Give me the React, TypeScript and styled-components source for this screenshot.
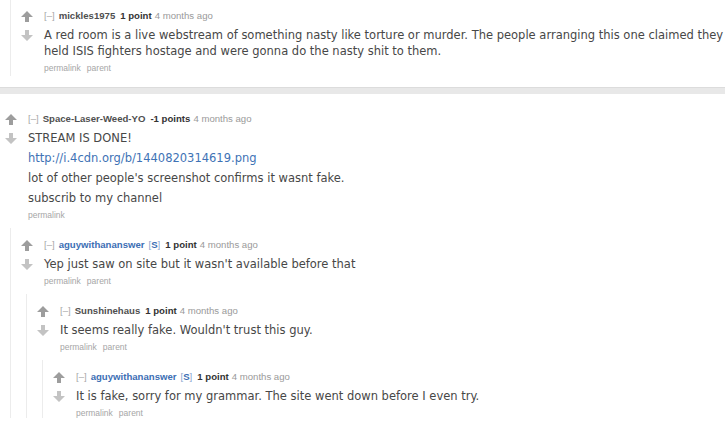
import React from 'react';
import styled, { createGlobalStyle } from 'styled-components';

const GlobalStyle = createGlobalStyle`
	html, body {
		margin: 0;
		padding: 0;
		background: #fff;
	}
	body {
		font-family: "DejaVu Sans", Verdana, sans-serif;
		overflow: hidden;
	}
`;

const Page = styled.div`
	width: 725px;
	height: 423px;
	overflow: hidden;
`;

const TopThread = styled.div`
	margin-left: 10px;
	border-left: 1px solid #ececec;
	padding: 9px 0 3px 10px;
`;

const Separator = styled.div`
	margin-top: 11px;
	height: 6px;
	background: #e8e8e8;
	border-top: 1px solid #dcdcdc;
`;

const Listing = styled.div`
	padding: 18px 0 0 5px;
`;

const Thread = styled.div``;

const Row = styled.div`
	display: flex;
	align-items: flex-start;
`;

const Midcol = styled.div`
	width: 23px;
	flex: none;
	display: flex;
	flex-direction: column;
	padding-top: 2px;
	gap: 8px;
`;

const Entry = styled.div`
	flex: 1;
	min-width: 0;
`;

const Tagline = styled.div`
	font-family: "Liberation Sans", Arial, sans-serif;
	font-size: 9.6px;
	line-height: 14px;
	color: #888;
	white-space: nowrap;
`;

const Expand = styled.span`
	color: #a8a8a8;
	margin-right: 4px;
`;

const Author = styled.span<{ $submitter?: boolean }>`
	font-weight: bold;
	color: ${(p) => (p.$submitter ? '#3c6eb4' : '#4f4f4f')};
`;

const SubmitterTag = styled.span`
	color: #3c6eb4;
	margin-left: 4px;
	& b {
		font-weight: bold;
	}
	& i {
		font-style: normal;
		color: #8aa6cf;
	}
`;

const Score = styled.span`
	font-weight: bold;
	color: #333;
	margin-left: 5px;
`;

const Time = styled.span`
	color: #9a9a9a;
	margin-left: 3px;
`;

const Body = styled.div`
	margin-top: 4px;
	font-size: 11.5px;
	color: #474747;
`;

const P = styled.p`
	margin: 0 0 4px;
	line-height: 16px;
`;

const Link = styled.a`
	color: #3e72b5;
	text-decoration: none;
`;

const Buttons = styled.ul`
	list-style: none;
	margin: 4px 0 0;
	padding: 0;
	display: flex;
	gap: 6px;
	font-family: "Liberation Sans", Arial, sans-serif;
	font-size: 8.5px;
	line-height: 10px;
`;

const Button = styled.li`
	color: #a6a6a6;
`;

const Child = styled.div`
	margin: 8px 0 0 5px;
	padding: 10px 0 0 10px;
	border-left: 1px solid #ececec;
`;

const Arrow = ({ down }: { down?: boolean }) => (
	<svg width="12" height="11" viewBox="0 0 12 11">
		<polygon
			points={down ? '4,0 8,0 8,5 12,5 6,11 0,5 4,5' : '6,0 12,6 8,6 8,11 4,11 4,6 0,6'}
			fill={down ? '#c3c3c3' : '#9d9d9d'}
		/>
	</svg>
);

type CommentData = {
	author: string;
	submitter?: boolean;
	score: string;
	body: React.ReactNode[];
	buttons: string[];
	replies?: CommentData[];
};

const Comment = ({ c }: { c: CommentData }) => (
	<Thread>
		<Row>
			<Midcol>
				<Arrow />
				<Arrow down />
			</Midcol>
			<Entry>
				<Tagline>
					<Expand>[–]</Expand>
					<Author $submitter={c.submitter}>{c.author}</Author>
					{c.submitter && (
						<SubmitterTag>
							<i>[</i>
							<b>S</b>
							<i>]</i>
						</SubmitterTag>
					)}
					<Score>{c.score}</Score>
					<Time>4 months ago</Time>
				</Tagline>
				<Body>
					{c.body.map((b, i) => (
						<P key={i}>{b}</P>
					))}
				</Body>
				<Buttons>
					{c.buttons.map((b) => (
						<Button key={b}>{b}</Button>
					))}
				</Buttons>
			</Entry>
		</Row>
		{c.replies?.map((r, i) => (
			<Child key={i}>
				<Comment c={r} />
			</Child>
		))}
	</Thread>
);

const first: CommentData = {
	author: 'mickles1975',
	score: '1 point',
	body: [
		'A red room is a live webstream of something nasty like torture or murder. The people arranging this one claimed they held ISIS fighters hostage and were gonna do the nasty shit to them.',
	],
	buttons: ['permalink', 'parent'],
};

const thread: CommentData = {
	author: 'Space-Laser-Weed-YO',
	score: '-1 points',
	body: [
		'STREAM IS DONE!',
		<Link href="#">http://i.4cdn.org/b/1440820314619.png</Link>,
		"lot of other people's screenshot confirms it wasnt fake.",
		'subscrib to my channel',
	],
	buttons: ['permalink'],
	replies: [
		{
			author: 'aguywithananswer',
			submitter: true,
			score: '1 point',
			body: ["Yep just saw on site but it wasn't available before that"],
			buttons: ['permalink', 'parent'],
			replies: [
				{
					author: 'Sunshinehaus',
					score: '1 point',
					body: ["It seems really fake. Wouldn't trust this guy."],
					buttons: ['permalink', 'parent'],
					replies: [
						{
							author: 'aguywithananswer',
							submitter: true,
							score: '1 point',
							body: ['It is fake, sorry for my grammar. The site went down before I even try.'],
							buttons: ['permalink', 'parent'],
						},
					],
				},
			],
		},
	],
};

const App = () => (
	<Page>
		<GlobalStyle />
		<TopThread>
			<Comment c={first} />
		</TopThread>
		<Separator />
		<Listing>
			<Comment c={thread} />
		</Listing>
	</Page>
);

export default App;
